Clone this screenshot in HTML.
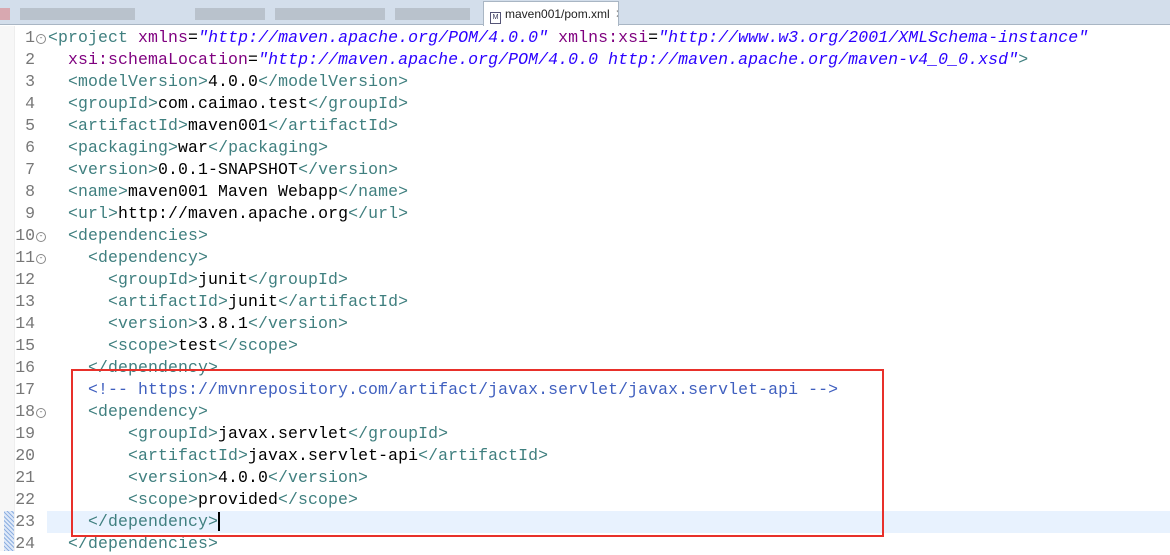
<!DOCTYPE html><html><head><style>
body{margin:0;width:1170px;height:551px;overflow:hidden;background:#fff;position:relative;font-family:"Liberation Mono",monospace}
.bar{position:absolute;left:0;top:0;width:1170px;height:24px;background:#d3deeb;border-bottom:1px solid #a9b6c4}
.blk{position:absolute;top:8px;height:12px;background:#b9c2cc}
.tab{position:absolute;left:483px;top:1px;width:134px;height:24px;background:#fff;border:1px solid #a9b6c4;border-bottom:none;font:12px "Liberation Sans",sans-serif;color:#222;line-height:24px;white-space:nowrap;overflow:hidden}
.ln{position:absolute;left:0;width:35px;text-align:right;color:#777;font-size:16.5px;line-height:22px}
.code{position:absolute;left:48px;font-size:16.5px;line-height:22px;white-space:pre;color:#000;letter-spacing:0.1px}
.t{color:#3f7f7f}.a{color:#7f007f}.v{color:#2a00ff;font-style:italic}.c{color:#3f5fbf}
.fold{position:absolute;left:36px;width:8px;height:8px;border:1px solid #888;border-radius:50%;font-size:8px;line-height:8px;text-align:center;color:#666}
</style></head><body>
<div class="bar">
<div class="blk" style="left:0;width:10px;background:#d8a8b0"></div>
<div class="blk" style="left:20px;width:115px"></div>
<div class="blk" style="left:195px;width:70px"></div>
<div class="blk" style="left:275px;width:110px"></div>
<div class="blk" style="left:395px;width:75px"></div>
<div class="tab"><span style="display:inline-block;width:9px;height:10px;border:1px solid #557;margin:0 4px 0 6px;vertical-align:-1px;font-size:7px;line-height:10px;text-align:center;color:#335">M</span>maven001/pom.xml <span style="color:#888;margin-left:2px">✕</span></div>
</div>
<div style="position:absolute;left:0;top:26px;width:14px;height:525px;background:#f7f7f7;border-right:1px solid #eee"></div>
<div style="position:absolute;left:47px;top:511px;width:1123px;height:22px;background:#e8f2fe"></div>
<div style="position:absolute;left:4px;top:511px;width:10px;height:40px;background:repeating-linear-gradient(45deg,#8fb0e0 0 1px,#dde8f8 1px 3px)"></div>
<div class="code" style="top:27px"><span class="t">&lt;project</span> <span class="a">xmlns</span>=<span class="v">"http://maven.apache.org/POM/4.0.0"</span> <span class="a">xmlns:xsi</span>=<span class="v">"http://www.w3.org/2001/XMLSchema-instance"</span>
  <span class="a">xsi:schemaLocation</span>=<span class="v">"http://maven.apache.org/POM/4.0.0 http://maven.apache.org/maven-v4_0_0.xsd"</span><span class="t">&gt;</span>
  <span class="t">&lt;modelVersion&gt;</span>4.0.0<span class="t">&lt;/modelVersion&gt;</span>
  <span class="t">&lt;groupId&gt;</span>com.caimao.test<span class="t">&lt;/groupId&gt;</span>
  <span class="t">&lt;artifactId&gt;</span>maven001<span class="t">&lt;/artifactId&gt;</span>
  <span class="t">&lt;packaging&gt;</span>war<span class="t">&lt;/packaging&gt;</span>
  <span class="t">&lt;version&gt;</span>0.0.1-SNAPSHOT<span class="t">&lt;/version&gt;</span>
  <span class="t">&lt;name&gt;</span>maven001 Maven Webapp<span class="t">&lt;/name&gt;</span>
  <span class="t">&lt;url&gt;</span>http://maven.apache.org<span class="t">&lt;/url&gt;</span>
  <span class="t">&lt;dependencies&gt;</span>
    <span class="t">&lt;dependency&gt;</span>
      <span class="t">&lt;groupId&gt;</span>junit<span class="t">&lt;/groupId&gt;</span>
      <span class="t">&lt;artifactId&gt;</span>junit<span class="t">&lt;/artifactId&gt;</span>
      <span class="t">&lt;version&gt;</span>3.8.1<span class="t">&lt;/version&gt;</span>
      <span class="t">&lt;scope&gt;</span>test<span class="t">&lt;/scope&gt;</span>
    <span class="t">&lt;/dependency&gt;</span>
    <span class="c">&lt;!-- https://mvnrepository.com/artifact/javax.servlet/javax.servlet-api --&gt;</span>
    <span class="t">&lt;dependency&gt;</span>
        <span class="t">&lt;groupId&gt;</span>javax.servlet<span class="t">&lt;/groupId&gt;</span>
        <span class="t">&lt;artifactId&gt;</span>javax.servlet-api<span class="t">&lt;/artifactId&gt;</span>
        <span class="t">&lt;version&gt;</span>4.0.0<span class="t">&lt;/version&gt;</span>
        <span class="t">&lt;scope&gt;</span>provided<span class="t">&lt;/scope&gt;</span>
    <span class="t">&lt;/dependency&gt;</span><span style="border-left:2px solid #000"></span>
  <span class="t">&lt;/dependencies&gt;</span></div>
<div class="ln" style="top:27px">1<br>2<br>3<br>4<br>5<br>6<br>7<br>8<br>9<br>10<br>11<br>12<br>13<br>14<br>15<br>16<br>17<br>18<br>19<br>20<br>21<br>22<br>23<br>24</div>
<div class="fold" style="top:34px">-</div>
<div class="fold" style="top:232px">-</div>
<div class="fold" style="top:254px">-</div>
<div class="fold" style="top:408px">-</div>
<div style="position:absolute;left:71px;top:369px;width:809px;height:164px;border:2px solid #e8302a"></div>
</body></html>
